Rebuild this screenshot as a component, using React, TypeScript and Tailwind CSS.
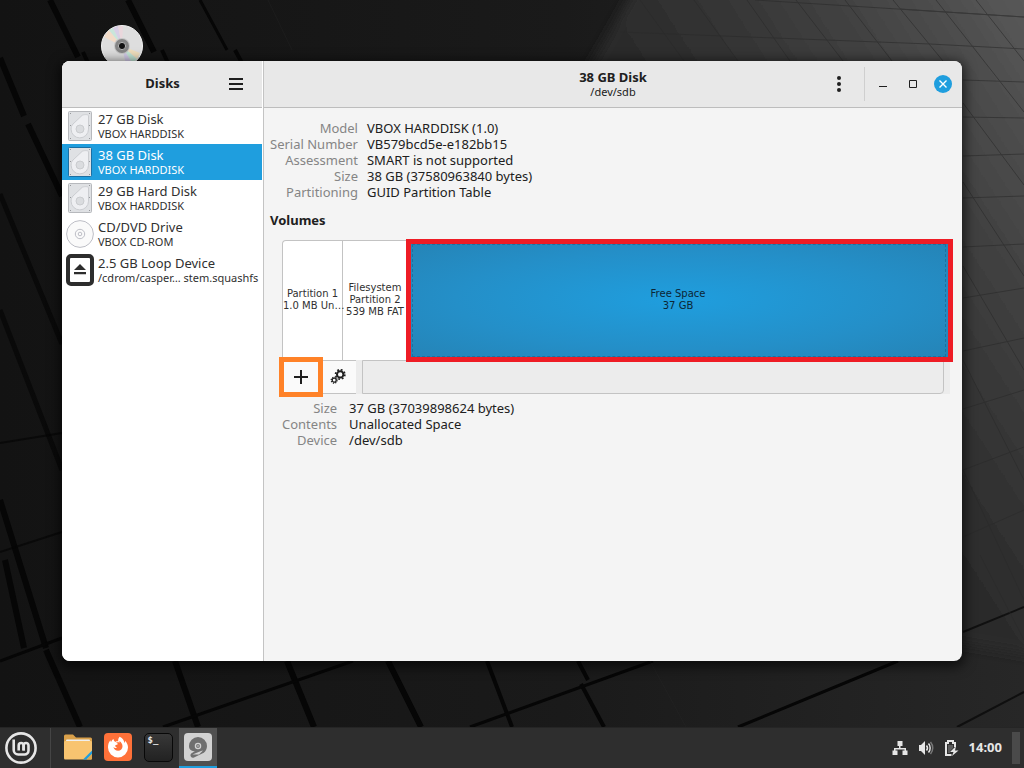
import type { ReactNode } from "react";

type Drive = {
  name: string;
  detail: string;
  kind: "hdd" | "optical" | "loop";
  selected?: boolean;
};

const DRIVES: Drive[] = [
  { name: "27 GB Disk", detail: "VBOX HARDDISK", kind: "hdd" },
  { name: "38 GB Disk", detail: "VBOX HARDDISK", kind: "hdd", selected: true },
  { name: "29 GB Hard Disk", detail: "VBOX HARDDISK", kind: "hdd" },
  { name: "CD/DVD Drive", detail: "VBOX CD-ROM", kind: "optical" },
  { name: "2.5 GB Loop Device", detail: "/cdrom/casper… stem.squashfs", kind: "loop" },
];

const DISK_INFO = [
  ["Model", "VBOX HARDDISK (1.0)"],
  ["Serial Number", "VB579bcd5e-e182bb15"],
  ["Assessment", "SMART is not supported"],
  ["Size", "38 GB (37580963840 bytes)"],
  ["Partitioning", "GUID Partition Table"],
];

const VOLUME_INFO = [
  ["Size", "37 GB (37039898624 bytes)"],
  ["Contents", "Unallocated Space"],
  ["Device", "/dev/sdb"],
];

function Wallpaper() {
  return (
    <svg className="absolute inset-0 h-full w-full" viewBox="0 0 1024 768" preserveAspectRatio="none" aria-hidden="true">
      <defs>
        <linearGradient id="wallBase" x1="0" y1="0" x2="1" y2="0">
          <stop offset="0" stopColor="#131313" />
          <stop offset="0.55" stopColor="#1a1a1a" />
          <stop offset="1" stopColor="#272727" />
        </linearGradient>
        <linearGradient id="wallLight" gradientUnits="userSpaceOnUse" x1="1024" y1="0" x2="620" y2="260">
          <stop offset="0" stopColor="#585858" />
          <stop offset="0.35" stopColor="#404040" />
          <stop offset="0.65" stopColor="#2f2f2f" />
          <stop offset="1" stopColor="#242424" />
        </linearGradient>
        <filter id="soft" x="-10%" y="-10%" width="120%" height="120%">
          <feGaussianBlur stdDeviation="6" />
        </filter>
      </defs>
      <rect width="1024" height="768" fill="url(#wallBase)" />
      <path d="M640 -20 L1060 -20 V660 L940 640 L584 76 Z" fill="url(#wallLight)" filter="url(#soft)" />
      <g stroke="#060606" fill="none">
        <path
          strokeWidth="6"
          d="M50 0 78 57M128 0 154 52M0 58 24 116M28 124 62 196M0 500 46 648M46 650 80 727M5 560 24 648M175 661 198 727M287 661 314 727M388 661 421 727"
        />
        <path strokeWidth="5" d="M0 194 62 344M0 310 62 470" opacity="0.7" />
        <path strokeWidth="4" d="M487 661 512 727M235 50 242 63M83 52 88 63M162 50 168 63M578 661 588 680M581 684 604 727" />
        <path strokeWidth="3" d="M200 0 227 50M0 661 62 638M163 727 353 661M470 727 653 661M738 727 898 661" />
        <path strokeWidth="2" d="M0 443 62 433M0 552 62 532M963 632 1024 607M957 727 1024 692" opacity="0.7" />
      </g>
      <g stroke="#2a2a2a" strokeWidth="1" fill="none" opacity="0.6">
        <path d="M755 0 1024 17M900 9 1024 17M620 32 930 44 1024 49M963 80 1024 82M963 117 1024 118M963 156 1024 154M963 198 1024 196M963 247 1024 244M963 298 1024 288M963 351 1024 338M963 409 1024 390M963 470 1024 447M963 537 1024 510" />
        <path d="M640 0 684 61M694 0 738 61M747 0 790 61M796 0 843 61M845 0 892 61M893 0 943 61M936 0 1024 112M976 0 1024 61M963 103 1024 185M963 182 1024 276M963 266 1024 370M963 360 1024 480M963 470 1024 600M980 555 1024 640" />
        <path d="M650 661 686 727M268 0 292 50" opacity="0.5" />
      </g>
    </svg>
  );
}

function DesktopDisc() {
  return (
    <svg className="absolute left-[101px] top-[25px] h-[42px] w-[42px]" viewBox="0 0 42 42" aria-hidden="true">
      <circle cx="21" cy="21" r="20.5" fill="#dedede" stroke="#f3f3f3" />
      <path d="M21 21 3 12 8 5Z" fill="#f3dcc8" />
      <path d="M21 21 8 5 12 3Z" fill="#c9e6da" />
      <path d="M21 21 12 3 17 1Z" fill="#d8cfe6" />
      <path d="M21 21 17 1 22 1Z" fill="#ead7dc" />
      <path d="M21 21 39 28 36 34Z" fill="#f0dfbe" />
      <path d="M21 21 36 34 31 38Z" fill="#c3e6d6" />
      <path d="M21 21 31 38 25 40Z" fill="#d3cbe8" />
      <circle cx="21" cy="21" r="8" fill="#c6c6c6" />
      <circle cx="21" cy="21" r="7" fill="#858585" />
      <circle cx="21" cy="21" r="3.6" fill="#111" stroke="#b5b5b5" strokeWidth="1" />
    </svg>
  );
}

function HddIcon({ selected }: { selected?: boolean }) {
  return (
    <svg width="24" height="30" viewBox="0 0 24 30" aria-hidden="true">
      <rect x="0.5" y="0.5" width="23" height="29" rx="1" fill="#dfe1e4" stroke={selected ? "#1b6fa3" : "#b7b9bd"} />
      <path
        d="M14 4.500C15 3.500 20.500 3 20.500 4.800V18.200a8.700 8.700 0 0 1-17.400 0C3.100 16 3.700 14.500 5 13Z"
        fill="#eeeff2"
        stroke="#cbcdd1"
      />
      <circle cx="12" cy="18" r="4" fill="#dadcdf" stroke="#cacccf" />
      <g fill="#96989c">
        <rect x="2" y="2" width="1" height="1" />
        <rect x="21" y="2" width="1" height="1" />
        <rect x="2" y="14" width="1" height="1" />
        <rect x="21" y="14" width="1" height="1" />
        <rect x="2" y="27" width="1" height="1" />
        <rect x="21" y="27" width="1" height="1" />
      </g>
    </svg>
  );
}

function OpticalIcon() {
  return (
    <svg width="28" height="28" viewBox="0 0 28 28" fill="#fafafa" stroke="#bdbec6" aria-hidden="true">
      <circle cx="14" cy="14" r="13.4" />
      <circle cx="14" cy="14" r="4.7" />
      <circle cx="14" cy="14" r="1.8" />
    </svg>
  );
}

function LoopIcon() {
  return (
    <svg width="28" height="32" viewBox="0 0 28 32" aria-hidden="true">
      <rect x="2" y="2" width="24" height="28" rx="3" fill="#fff" stroke="#2d2d2d" strokeWidth="4" />
      <path d="M14 10 20 16H8ZM8 18H20V20.200H8Z" fill="#2d2d2d" />
    </svg>
  );
}

function DriveIcon({ drive }: { drive: Drive }) {
  if (drive.kind === "optical") return <OpticalIcon />;
  if (drive.kind === "loop") return <LoopIcon />;
  return <HddIcon selected={drive.selected} />;
}

function GearsIcon() {
  return (
    <svg width="16" height="16" viewBox="0 0 16 16" fill="none" stroke="#1f1f1f" aria-hidden="true">
      <circle cx="10.200" cy="5.400" r="3.200" strokeWidth="2" />
      <circle cx="10.200" cy="5.400" r="4.700" strokeWidth="1.600" strokeDasharray="1.850 1.840" />
      <circle cx="4.200" cy="11.200" r="2" strokeWidth="1.300" />
      <circle cx="4.200" cy="11.200" r="3" strokeWidth="1.200" strokeDasharray="1.200 1.156" />
    </svg>
  );
}

type InfoTableProps = { rows: string[][]; labelClass: string; valueClass: string };

function InfoTable({ rows, labelClass, valueClass }: InfoTableProps) {
  return (
    <table className="text-[13px] leading-4">
      <tbody>
        {rows.map(([label, value]) => (
          <tr key={label}>
            <th scope="row" className={`${labelClass} whitespace-nowrap p-0 text-right font-normal text-[#858585]`}>
              {label}
            </th>
            <td className={`${valueClass} whitespace-nowrap py-0 pr-0 text-[#202020]`}>{value}</td>
          </tr>
        ))}
      </tbody>
    </table>
  );
}

function Sidebar() {
  return (
    <aside className="flex w-[202px] shrink-0 flex-col border-r border-[#c3c3c3] bg-white">
      <header className="mr-px grid h-[47px] shrink-0 grid-cols-[1fr_auto_1fr] items-center border-b border-[#bdbdbd] bg-[#e8e8e8] pr-[15px]">
        <span />
        <h1 className="pl-4 font-bold">Disks</h1>
        <button type="button" aria-label="Menu" className="justify-self-end p-1">
          <svg width="14" height="12" viewBox="0 0 14 12" fill="#1f1f1f">
            <path d="M0 0h14v2H0zM0 5h14v2H0zM0 10h14v2H0z" />
          </svg>
        </button>
      </header>
      <nav className="mr-px flex flex-col">
        {DRIVES.map((drive) => (
          <button
            key={drive.name}
            type="button"
            className={`flex h-9 items-center gap-1 pl-1 text-left ${drive.selected ? "bg-[#1f9ede] text-white" : "text-[#303030]"}`}
          >
            <span className="grid w-7 shrink-0 place-items-center">
              <DriveIcon drive={drive} />
            </span>
            <span className="min-w-0 whitespace-nowrap">
              <span className="block text-[13px] leading-4">{drive.name}</span>
              <span className="block text-[11px] leading-[14px]">{drive.detail}</span>
            </span>
          </button>
        ))}
      </nav>
    </aside>
  );
}

function WindowHeader() {
  return (
    <header className="grid h-[47px] shrink-0 grid-cols-[1fr_auto_1fr] items-center border-b border-[#bdbdbd] bg-[#e8e8e8]">
      <span />
      <div className="text-center">
        <h2 className="leading-4 font-bold">38 GB Disk</h2>
        <p className="text-[11px] leading-[14px]">/dev/sdb</p>
      </div>
      <div className="flex items-center justify-end pr-1">
        <button type="button" aria-label="Drive options" className="mr-[15px] grid h-6 w-5 place-items-center">
          <svg width="4" height="16" viewBox="0 0 4 16" fill="#1f1f1f">
            <circle cx="2" cy="2" r="2" />
            <circle cx="2" cy="8" r="2" />
            <circle cx="2" cy="14" r="2" />
          </svg>
        </button>
        <span className="h-[34px] w-px bg-[#cfcfcf]" />
        <button type="button" aria-label="Minimize" className="ml-[3px] grid h-6 w-[30px] place-items-center">
          <svg width="8" height="8" viewBox="0 0 8 8">
            <path d="M0 6h8v1H0z" fill="#1f1f1f" />
          </svg>
        </button>
        <button type="button" aria-label="Maximize" className="grid h-6 w-[30px] place-items-center">
          <svg width="8" height="8" viewBox="0 0 8 8">
            <path d="M.5.5h7v7h-7z" fill="none" stroke="#1f1f1f" />
          </svg>
        </button>
        <button type="button" aria-label="Close" className="grid h-[18px] w-[30px] place-items-center">
          <svg width="18" height="18" viewBox="0 0 18 18">
            <circle cx="9" cy="9" r="9" fill="#1f9ede" />
            <path d="M5.500 5.500 12.500 12.500M12.500 5.500 5.500 12.500" stroke="#fff" strokeWidth="1.400" />
          </svg>
        </button>
      </div>
    </header>
  );
}

function Volumes() {
  return (
    <div className="mr-[13px] ml-3">
      <div className="flex h-[120px] text-center font-['DejaVu_Sans',sans-serif] text-[10px] leading-3 text-[#303030]">
        <button
          type="button"
          className="relative w-[61px] shrink-0 whitespace-nowrap rounded-tl-sm border border-b-0 border-[#c3c3c3] bg-white pb-0.5"
        >
          Partition 1
          <br />
          1.0 MB Un…
        </button>
        <button type="button" className="w-16 shrink-0 whitespace-nowrap border-t border-[#c3c3c3] bg-white pb-0.5">
          Filesystem
          <br />
          Partition 2
          <br />
          539 MB FAT
        </button>
        <button
          type="button"
          className="relative min-w-0 flex-1 bg-[radial-gradient(ellipse_at_center,#1f9ede_0%,#248fc8_58%,#2583b5_100%)] text-[#0c2635]"
        >
          <span className="absolute top-1 right-[3px] bottom-[3px] left-[5px] border border-dashed border-[#1d719f]" />
          <span className="absolute -top-px -right-1 -bottom-0.5 -left-px border-5 border-[#ee1c25]" />
          Free Space
          <br />
          37 GB
        </button>
      </div>
      <div className="-mr-px flex h-[34px] bg-[#ececec]">
        <button
          type="button"
          aria-label="Create partition"
          className="relative grid w-[38px] place-items-center border-b border-[#c3c3c3] bg-[#fafafa]"
        >
          <svg width="14" height="14" viewBox="0 0 14 14" fill="#1f1f1f">
            <path d="M6 0h2v6h6v2H8v6H6V8H0V6h6z" />
          </svg>
          <span className="absolute -inset-x-[3px] -top-[3px] -bottom-1 border-5 border-[#ff8228]" />
        </button>
        <button
          type="button"
          aria-label="Additional partition options"
          className="grid w-9 place-items-center border-y border-[#c3c3c3] bg-[#fafafa]"
        >
          <GearsIcon />
        </button>
        <div className="mr-1.5 ml-1.5 flex-1 rounded-br-sm border border-[#c3c3c3] bg-[#ececec]" />
      </div>
    </div>
  );
}

function DisksWindow() {
  return (
    <main className="absolute inset-x-[62px] top-[61px] bottom-[66px] flex overflow-hidden rounded-lg bg-[#f4f4f4] text-[13px] text-[#202020] shadow-[0_3px_12px_3px_rgba(0,0,0,0.6)]">
      <Sidebar />
      <section className="flex min-w-0 flex-1 flex-col">
        <WindowHeader />
        <div className="pt-3 pl-1.5">
          <InfoTable rows={DISK_INFO} labelClass="w-[85px]" valueClass="pl-[9px]" />
          <h3 className="mt-3 leading-4 font-bold">Volumes</h3>
          <div className="mt-3">
            <Volumes />
          </div>
          <div className="mt-1.5 ml-3">
            <InfoTable rows={VOLUME_INFO} labelClass="w-[55px]" valueClass="pl-3" />
          </div>
        </div>
      </section>
    </main>
  );
}

function TaskButton({ label, active, children }: { label: string; active?: boolean; children: ReactNode }) {
  return (
    <button
      type="button"
      aria-label={label}
      className={`grid w-[38px] place-items-center border-b-2 ${active ? "border-[#1f9ede] bg-[#505050]" : "border-transparent"}`}
    >
      {children}
    </button>
  );
}

function Taskbar() {
  return (
    <footer className="relative flex h-[41px] shrink-0 border-t border-[#252525] bg-[#2e2e2e]">
      <button type="button" aria-label="Applications menu" className="grid w-[42px] place-items-center">
        <svg width="32" height="32" viewBox="0 0 32 32" fill="none" stroke="#e6e6e6" strokeWidth="2.600">
          <circle cx="16" cy="16" r="14.600" />
          <path d="M8.700 7.500V18a4.500 4.500 0 0 0 4.500 4.500H19.500a4 4 0 0 0 4-4V13.500a2.400 2.400 0 0 0-4.900 0V18.500" />
          <path d="M18.600 18.500V13.500a2.400 2.400 0 0 0-4.900 0V18.500" />
        </svg>
      </button>
      <span className="mr-2 ml-2 w-px bg-[#454545]" />
      <div className="flex gap-0.5">
        <TaskButton label="Files">
          <svg width="28" height="26" viewBox="0 0 28 26">
            <path d="M0 2a1.500 1.500 0 0 1 1.500-1.500H9l3 3h14.500A1.500 1.500 0 0 1 28 5v10H0Z" fill="#d9a04a" />
            <rect x="2" y="5.500" width="24" height="6" rx="1" fill="#efefef" />
            <path d="M0 8.500c0-1 .5-1.500 1.500-1.500h25c1 0 1.500.5 1.500 1.500V24c0 1-.5 1.500-1.500 1.500h-25C.5 25.500 0 25 0 24Z" fill="#f8c470" />
            <path d="M28 16.500 19 25.500H22.500L28 20Z" fill="#1f9ede" />
            <path d="M28 20 22.500 25.500H26.500c1 0 1.500-.5 1.500-1.500Z" fill="#dda850" />
          </svg>
        </TaskButton>
        <TaskButton label="Firefox">
          <svg width="28" height="28" viewBox="0 0 28 28">
            <rect width="28" height="28" rx="4" fill="#ff7139" />
            <path
              d="M15.700 3.800C19 5.500 20 7.500 20.500 10c.5-.7.600-1.500.5-2.300C23 9.500 24 12 24 14.500a10 10 0 0 1-20 0C4 11.500 4.800 9 6.400 7.300l.6 1.900C7.500 7.700 8.400 6.600 9.600 6c0 1.300.6 2.300 1.600 2.900 1-.5 2-.6 3-.5-.2-1.800.3-3.300 1.500-4.600Z"
              fill="#fff"
            />
            <path
              d="M15.400 8c2 1.400 3.100 3.200 3.100 5.300a4.400 4.400 0 0 1-4.400 4.500c-2.300 0-4.300-1.500-4.700-3.700 1 1 2.200 1.200 3.600.7-1.200-.5-1.800-1.200-1.900-2.200l3.100-1.600c-.8-.3-1.600-.8-2.100-1.400 1.300-.5 2.600-.5 3.700 0-.3-.5-.4-1-.4-1.600Z"
              fill="#ff7139"
            />
          </svg>
        </TaskButton>
        <TaskButton label="Terminal">
          <span className="block h-[29px] w-[29px] rounded-[5px] border border-[#080808] bg-linear-to-b from-[#383838] to-[#222222] pl-[3px] text-left font-['DejaVu_Sans_Mono',monospace] text-[9px] leading-[13px] font-bold text-[#e8e8e8]">
            $_
          </span>
        </TaskButton>
        <TaskButton label="Disks" active>
          <svg width="28" height="28" viewBox="0 0 28 28">
            <rect width="28" height="28" rx="4" fill="#d2d2d2" />
            <path d="M14 4a9 9 0 0 1 9 9c0 2.800-1.200 5.200-3.200 6.800L10 24.500c-2 .8-4-.8-3.500-2.700.2-1 .8-1.400 1.500-1.900l3-1.800C7.500 18.500 5 16.500 5 13a9 9 0 0 1 9-9Z" fill="#6f6f6f" />
            <path d="M17 18 8.500 21.500 15 21.600 19 17.500Z" fill="#d2d2d2" />
            <circle cx="14" cy="13" r="2.600" fill="#777" stroke="#d2d2d2" strokeWidth="1.300" />
            <circle cx="14" cy="13" r="0.800" fill="#d2d2d2" />
          </svg>
        </TaskButton>
      </div>
      <div className="mr-1 ml-auto flex items-center gap-2.5 text-[#e6e6e6]">
        <button type="button" aria-label="Network">
          <svg width="16" height="16" viewBox="0 0 16 16" fill="currentColor">
            <path d="M5.500 1h5v5h-2v2h5.500v2.500H15.500V15h-5v-4.500h2V9.500h-9v1h2V15h-5v-4.500H2V8h5V6H5.500Z" />
          </svg>
        </button>
        <button type="button" aria-label="Volume">
          <svg width="16" height="16" viewBox="0 0 16 16" fill="none" stroke="currentColor" strokeWidth="1.500">
            <path d="M1 5h2l4-4v14l-4-4H1Z" fill="currentColor" stroke="none" />
            <path d="M8.500 5.500c1.200 1.500 1.200 3.500 0 5M10.500 3.500c2.200 2.500 2.200 6.500 0 9" />
            <path d="M12.500 2c3 3.500 3 8.500 0 12" opacity="0.4" />
          </svg>
        </button>
        <button type="button" aria-label="Battery">
          <svg width="15" height="16" viewBox="0 0 15 16">
            <path d="M7.500 15H2V3h2V1h5v2h2v4" fill="none" stroke="currentColor" strokeWidth="2" />
            <path d="M4 5h5v3L6 11v2H4Z" fill="currentColor" opacity="0.25" />
            <path d="M12 6 6 12h3.500L8 16l6.500-5.500H11Z" fill="currentColor" />
          </svg>
        </button>
        <time className="text-[13px] font-bold">14:00</time>
        <button type="button" aria-label="Show desktop" className="h-8 w-2 bg-[#4a4a4a]" />
      </div>
    </footer>
  );
}

export default function App() {
  return (
    <div className="relative flex h-screen min-h-[560px] flex-col overflow-hidden bg-[#151515] font-['Noto_Sans','Liberation_Sans',sans-serif]">
      <Wallpaper />
      <div className="relative flex-1">
        <DesktopDisc />
        <DisksWindow />
      </div>
      <Taskbar />
    </div>
  );
}
